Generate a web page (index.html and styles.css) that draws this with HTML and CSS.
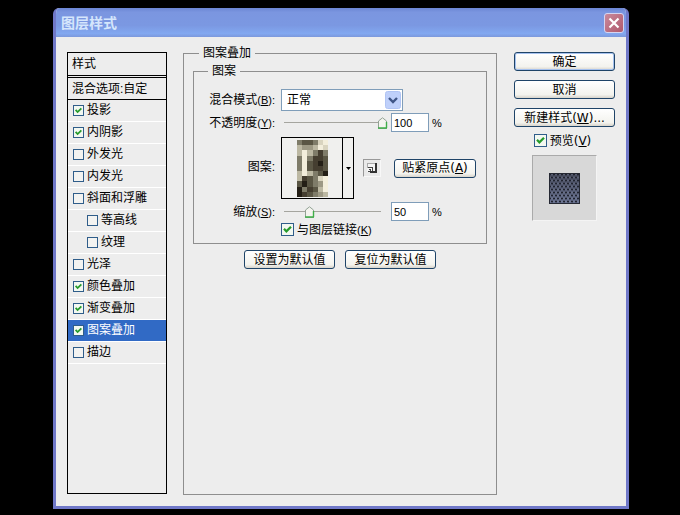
FILE: index.html
```html
<!DOCTYPE html>
<html lang="zh-CN">
<head>
<meta charset="UTF-8">
<meta name="viewport" content="width=device-width, initial-scale=1.0">
<title>图层样式</title>
<link rel="stylesheet" href="styles.css">
</head>
<body>
<div class="dialog">
    <div class="titlebar">
        <h1>图层样式</h1>
        <button class="close" aria-label="关闭">
            <svg width="12" height="12" viewBox="0 0 12 12"><path d="M1.5 1.5 L10.5 10.5 M10.5 1.5 L1.5 10.5" stroke="#fff" stroke-width="2.2"/></svg>
        </button>
    </div>

    <div class="content">
        <div class="styles">
            <div class="styles-title">样式</div>
            <div class="styles-blend">混合选项:自定</div>
            <label class="style"><input type="checkbox" checked><span>投影</span></label>
            <label class="style"><input type="checkbox" checked><span>内阴影</span></label>
            <label class="style"><input type="checkbox"><span>外发光</span></label>
            <label class="style"><input type="checkbox"><span>内发光</span></label>
            <label class="style"><input type="checkbox"><span>斜面和浮雕</span></label>
            <label class="style sub"><input type="checkbox"><span>等高线</span></label>
            <label class="style sub"><input type="checkbox"><span>纹理</span></label>
            <label class="style"><input type="checkbox"><span>光泽</span></label>
            <label class="style"><input type="checkbox" checked><span>颜色叠加</span></label>
            <label class="style"><input type="checkbox" checked><span>渐变叠加</span></label>
            <label class="style active"><input type="checkbox" checked><span>图案叠加</span></label>
            <label class="style"><input type="checkbox"><span>描边</span></label>
        </div>

        <fieldset class="panel">
            <legend>图案叠加</legend>
            <fieldset class="group">
                <legend>图案</legend>
                <div class="form">
                    <label class="name" for="blend">混合模式<small>(<u>B</u>):</small></label>
                    <div class="control">
                        <select id="blend"><option>正常</option></select>
                    </div>

                    <label class="name" for="opacity">不透明度<small>(<u>Y</u>):</small></label>
                    <div class="control">
                        <input type="range" min="0" max="100" value="100" aria-label="不透明度">
                        <input type="text" id="opacity" value="100"><span class="unit">%</span>
                    </div>

                    <span class="name">图案:</span>
                    <div class="control pattern-row">
                        <button class="picker" aria-label="图案">
                            <span class="swatch">
                                <svg width="31" height="57" viewBox="0 0 6 11" preserveAspectRatio="none" shape-rendering="crispEdges">
                                    <rect width="6" height="11" fill="#f3eedb"/>
                                    <path fill="#7f7c69" d="M0 0h1v1h-1z M3 0h1v1h-1z M0 3h1v3h-1z M3 2h1v1h-1z M5 2h1v1h-1z M2 3h1v1h-1z M3 6h1v1h-1z M3 7h1v1h-1z M1 9h1v1h-1z M3 8h1v1h-1z M3 10h1v1h-1z"/>
                                    <path fill="#5a5644" d="M1 0h2v1h-2z M2 4h1v2h-1z M5 3h1v3h-1z M4 6h1v1h-1z M0 8h1v1h-1z M2 8h1v1h-1z M3 9h1v1h-1z M2 10h1v1h-1z M2 7h1v1h-1z"/>
                                    <path fill="#bcb8a2" d="M0 1h1v1h-1z M3 1h1v1h-1z M0 2h1v1h-1z M2 2h1v1h-1z M0 6h1v1h-1z M2 6h1v1h-1z M0 7h1v1h-1z M4 9h1v1h-1z M5 10h1v1h-1z"/>
                                    <path fill="#9d9984" d="M1 1h2v1h-2z M4 8h1v1h-1z M4 10h1v1h-1z"/>
                                    <path fill="#453e30" d="M4 2h1v2h-1z M3 3h1v3h-1z M4 5h1v1h-1z M1 7h1v1h-1z M2 9h1v1h-1z M1 10h1v1h-1z"/>
                                    <path fill="#241f16" d="M4 4h1v1h-1z M5 6h1v1h-1z M1 8h1v1h-1z M0 9h1v2h-1z"/>
                                    <path fill="#d9d4bf" d="M4 0h1v1h-1z M5 1h1v1h-1z M4 7h1v1h-1z"/>
                                </svg>
                            </span>
                            <span class="arrow"><svg width="5" height="3" viewBox="0 0 5 3"><path d="M0 0h5L2.5 3z"/></svg></span>
                        </button>
                        <button class="new-preset" aria-label="新建预设">
                            <svg width="10" height="10" viewBox="0 0 10 10" shape-rendering="crispEdges">
                                <path d="M0 0h9v9h-9z" fill="#f4f4f4"/>
                                <path d="M0 0h9v1h-8v4h-1z" fill="#aaa"/>
                                <path d="M8 0h2v10h-7v-2h5z" fill="#333"/>
                                <path d="M1 4h5v1h-5z M5 5h1v3h-1z M2 6h2v1h-2z M3 7h1v1h-1z M1 8h2v1h-2z" fill="#444"/>
                            </svg>
                        </button>
                        <button class="btn snap">贴紧原点(<u>A</u>)</button>
                    </div>

                    <label class="name" for="scale">缩放<small>(<u>S</u>):</small></label>
                    <div class="control">
                        <input type="range" min="0" max="100" value="21" aria-label="缩放">
                        <input type="text" id="scale" value="50"><span class="unit">%</span>
                    </div>

                    <label class="check link"><input type="checkbox" checked><span>与图层链接<small>(<u>K</u>)</small></span></label>
                </div>
            </fieldset>
            <div class="defaults">
                <button class="btn">设置为默认值</button>
                <button class="btn">复位为默认值</button>
            </div>
        </fieldset>

        <div class="actions">
            <button class="btn primary">确定</button>
            <button class="btn">取消</button>
            <button class="btn">新建样式(<u>W</u>)...</button>
            <label class="check preview-check"><input type="checkbox" checked><span>预览(<u>V</u>)</span></label>
            <div class="preview">
                <svg width="31" height="31" viewBox="0 0 31 31">
                    <defs>
                        <linearGradient id="shade" x1="0" y1="0" x2="0" y2="1">
                            <stop offset="0" stop-color="#484c5e"/>
                            <stop offset="1" stop-color="#6a7392"/>
                        </linearGradient>
                        <pattern id="mesh" width="4" height="6" patternUnits="userSpaceOnUse">
                            <circle cx="1" cy="1.5" r="1.1" fill="#20232f"/>
                            <circle cx="3" cy="4.5" r="1.1" fill="#20232f"/>
                            <path d="M2.5 1h1v1h-1z M0.5 4h1v1h-1z" fill="#8790a6" opacity="0.5"/>
                        </pattern>
                    </defs>
                    <rect width="31" height="31" fill="url(#shade)"/>
                    <rect width="31" height="31" fill="url(#mesh)"/>
                    <rect x="0.5" y="0.5" width="30" height="30" fill="none" stroke="#252833"/>
                </svg>
            </div>
        </div>
    </div>
</div>
</body>
</html>
```
FILE: styles.css
```css
* {
    box-sizing: border-box;
}
body {
    margin: 0;
    padding: 8px 51px 6px 53px;
    min-height: 100vh;
    display: flex;
    background-color: #000;
    color: #000;
    font-family: "Liberation Sans", "Noto Sans CJK SC", sans-serif;
    font-size: 12px;
    line-height: 16px;
}
.dialog {
    flex: 1;
    display: flex;
    flex-direction: column;
    background-color: #ededed;
    border: 3px solid #7078c8;
    border-top: none;
    border-radius: 6px 6px 0 0;
    overflow: hidden;
}

/* title bar */
.titlebar {
    display: flex;
    align-items: center;
    justify-content: space-between;
    height: 29px;
    margin: 0 -3px;
    padding: 0 5px 0 8px;
    background: linear-gradient(#6c86d4 0%, #7b96e0 15%, #7b98e2 60%, #82a8f0 88%, #7c98dc 100%);
}
h1 {
    margin: 0;
    font-size: 14px;
    line-height: 20px;
    color: #d5e6fc;
}
small {
    font-size: 11px;
}
button {
    padding: 0;
    font: inherit;
    color: #000;
}
.close {
    display: flex;
    align-items: center;
    justify-content: center;
    width: 20px;
    height: 20px;
    background: linear-gradient(135deg, #c98a9c, #b0586c);
    border: 1px solid #d5d4f0;
    border-radius: 3px;
}

.content {
    flex: 1;
    display: flex;
    padding: 15px 11px 11px;
}

/* list of styles */
.styles {
    width: 100px;
    margin-bottom: 1px;
    border: 1px solid #000;
}
.styles-title {
    height: 25px;
    padding: 3px 4px;
    border-bottom: 3px double #000;
}
.styles-blend {
    height: 22px;
    padding: 3px 4px;
    border-bottom: 1px solid #000;
}
.style {
    display: flex;
    align-items: center;
    gap: 3px;
    height: 22px;
    padding-left: 5px;
    border-bottom: 1px solid #fff;
}
.style.sub {
    padding-left: 19px;
}
.style.active {
    background-color: #316ac5;
    color: #fff;
}
.style span {
    padding-bottom: 2px;
}

input[type="checkbox"] {
    appearance: none;
    flex: none;
    width: 13px;
    height: 13px;
    margin: 0;
    border: 1px solid #2f5d8a;
    background-color: #f3f3f1;
}
input[type="checkbox"]:checked {
    background: #f3f8f1 url("data:image/svg+xml,%3Csvg xmlns='http://www.w3.org/2000/svg' viewBox='0 0 11 11'%3E%3Cpath d='M2 4.8 L4.4 7.4 L9 2.8' fill='none' stroke='%23259a2b' stroke-width='2.2'/%3E%3C/svg%3E") center / 100% no-repeat;
}
.style input[type="checkbox"] {
    width: 11px;
    height: 11px;
}

/* pattern overlay panel */
fieldset {
    min-width: 0;
    margin: 0;
    border: 1px solid #8e8e8e;
}
legend {
    padding: 0 4px;
}
.panel {
    flex: 1;
    margin: -7px 17px 0 16px;
    padding: 2px 9px;
}
.panel > legend {
    margin-left: 6px;
}
.group {
    padding: 10px 0 7px;
}
.group > legend {
    margin-left: 14px;
}
.form {
    display: grid;
    grid-template-columns: 81px 1fr;
    gap: 2px 6px;
    align-items: center;
}
.name {
    text-align: right;
    white-space: nowrap;
}
.control {
    display: flex;
    align-items: center;
}
select {
    appearance: none;
    width: 122px;
    height: 22px;
    padding: 0 20px 0 5px;
    border: 1px solid #7f9db9;
    border-radius: 0;
    font: inherit;
    color: #000;
    background:
        url("data:image/svg+xml,%3Csvg xmlns='http://www.w3.org/2000/svg' viewBox='0 0 16 18'%3E%3Crect x='.5' y='.5' width='15' height='17' rx='2' fill='%23bfd0fa' stroke='%23b0c4f4'/%3E%3Cpath d='M4 7 L8 11 L12 7' fill='none' stroke='%233f5586' stroke-width='2.4'/%3E%3C/svg%3E") right 1px center / 16px 18px no-repeat,
        #fff;
}
input[type="text"] {
    width: 38px;
    height: 19px;
    margin: 0 3px;
    padding: 0 2px;
    border: 1px solid #7f9db9;
    background-color: #fff;
    font: inherit;
    font-size: 11px;
}
input[type="range"] {
    appearance: none;
    width: 104px;
    height: 12px;
    margin: 0 0 0 3px;
    background: linear-gradient(#a5a59f, #a5a59f) left center / 97px 1px no-repeat;
}
input[type="range"]::-webkit-slider-thumb {
    appearance: none;
    width: 11px;
    height: 12px;
    background: url("data:image/svg+xml,%3Csvg xmlns='http://www.w3.org/2000/svg' viewBox='0 0 11 12'%3E%3Cpath d='M1.5 11.5 V4 L5.5 .8 L9.5 4 V11.5 Z' fill='%23f4f4ef' stroke='%2392a294'/%3E%3Cpath d='M1 11h9 M9.5 5v6' stroke='%233fae49' stroke-width='1.4'/%3E%3C/svg%3E") center no-repeat;
}
.unit {
    font-size: 11px;
}
.pattern-row {
    padding: 3px 0 1px;
}
.picker {
    display: flex;
    width: 73px;
    height: 62px;
    border: 1px solid #000;
    background-color: #f0f0ee;
}
.swatch, .arrow {
    display: flex;
    align-items: center;
    justify-content: center;
}
.swatch {
    flex: 1;
    height: 100%;
    border-right: 1px solid #000;
}
.arrow {
    width: 10px;
    height: 100%;
}
.new-preset {
    display: flex;
    align-items: center;
    justify-content: center;
    width: 18px;
    height: 18px;
    margin: 0 13px 0 9px;
    background-color: #e9e9e9;
    border: 1px solid;
    border-color: #999 #f8f8f8 #f8f8f8 #999;
}
.check {
    display: flex;
    align-items: center;
    gap: 3px;
}
.link {
    grid-column: 2;
    height: 13px;
}

/* XP style buttons */
.btn {
    height: 19px;
    border: 1px solid #1f4468;
    border-radius: 3px;
    background: linear-gradient(#fff, #f3f3ee 80%, #d8d4cb);
    font-family: "DejaVu Sans", "Noto Sans CJK SC", sans-serif;
    line-height: 16px;
    white-space: nowrap;
}
.btn.primary {
    box-shadow: inset 0 0 0 1px #a5c1ee;
}
.snap {
    width: 82px;
}
.defaults {
    display: flex;
    justify-content: center;
    gap: 10px;
    margin-top: 6px;
}
.defaults .btn {
    width: 91px;
}

/* right column */
.actions {
    width: 101px;
    display: flex;
    flex-direction: column;
    gap: 9px;
}
.preview-check {
    align-self: center;
    height: 13px;
    margin: -2px 4px -1px 0;
    font-family: "DejaVu Sans", "Noto Sans CJK SC", sans-serif;
}
.preview {
    display: flex;
    align-items: center;
    justify-content: center;
    align-self: center;
    width: 65px;
    height: 66px;
    background-color: #d8d8d8;
    border: 1px solid;
    border-color: #aaa #f4f4f4 #f4f4f4 #aaa;
}
```
